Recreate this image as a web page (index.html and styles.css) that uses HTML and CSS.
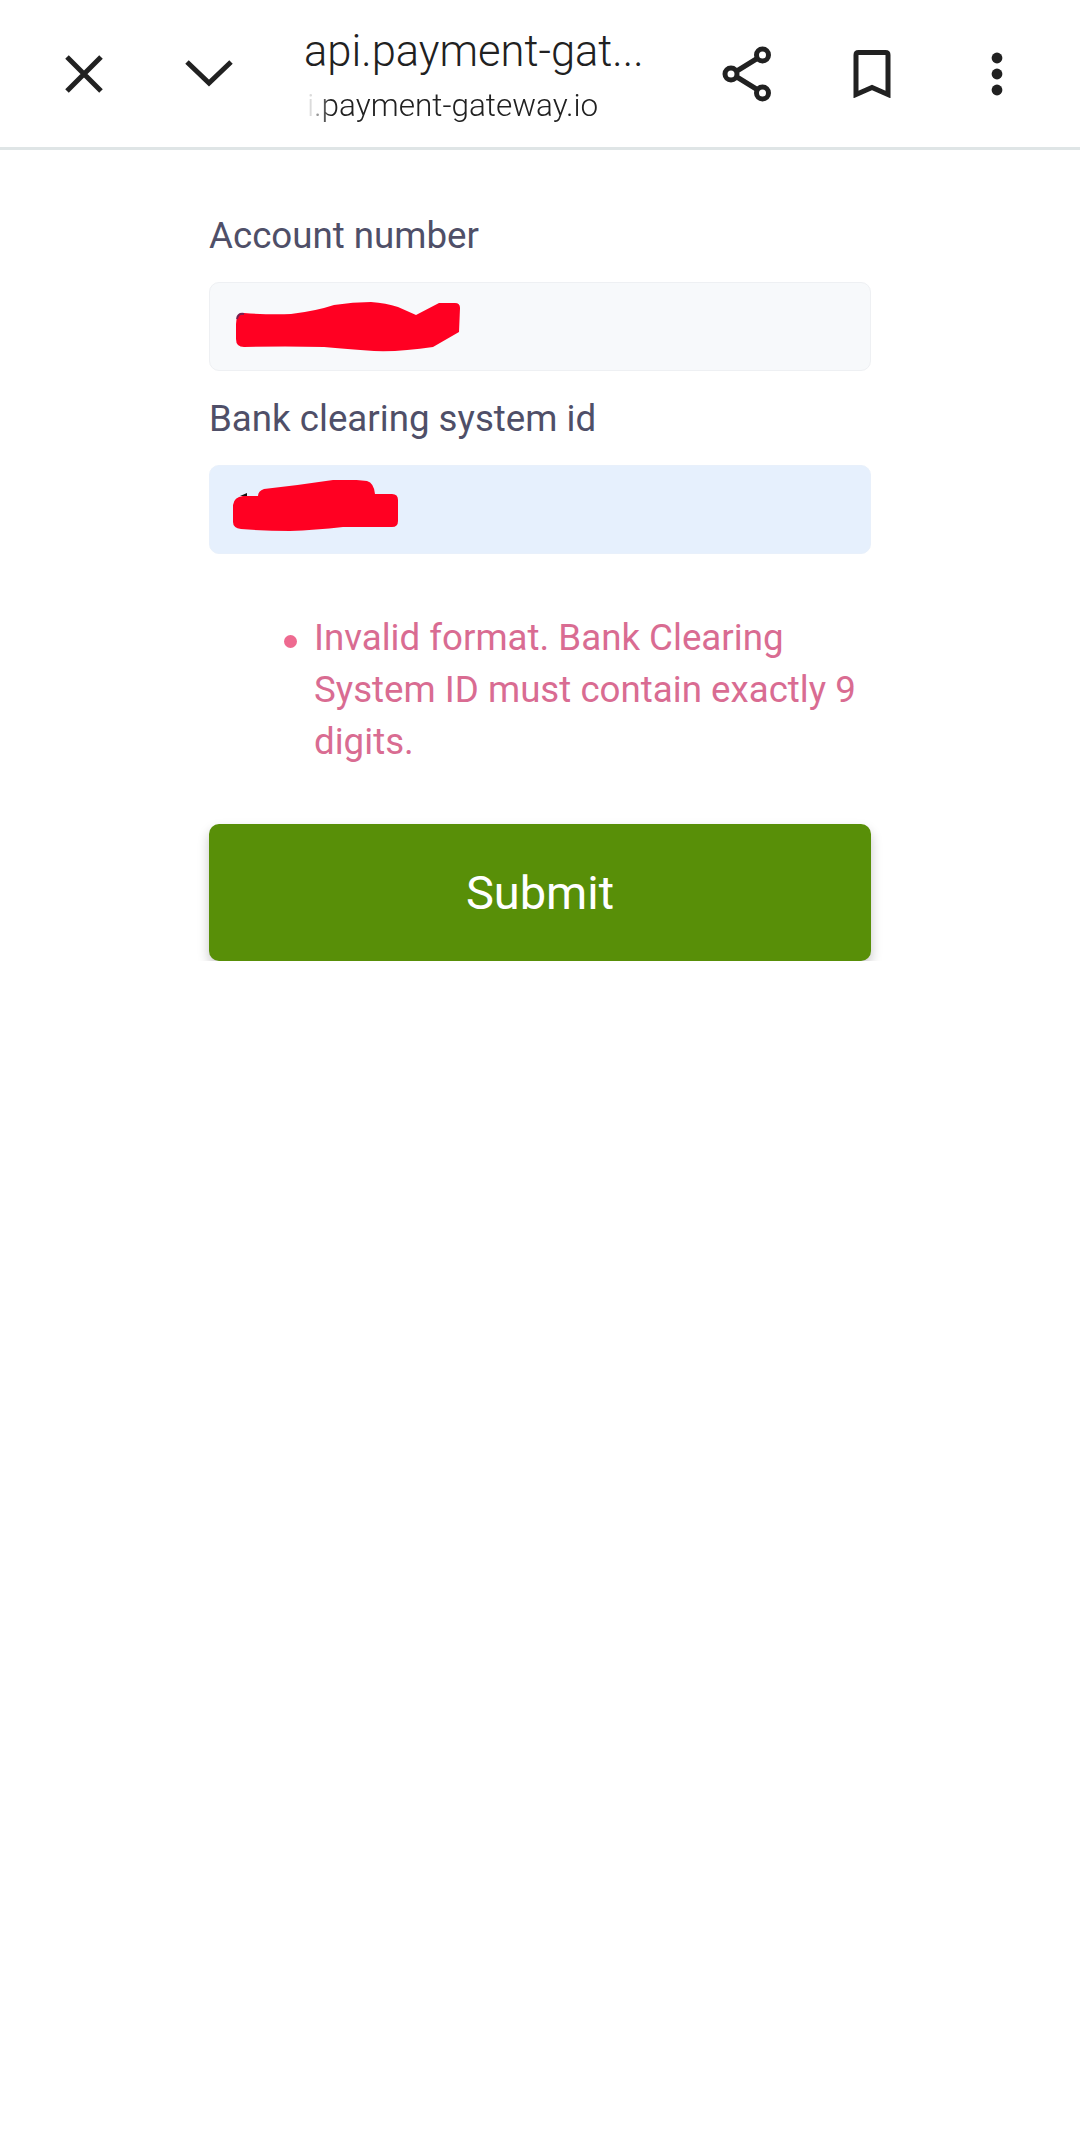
FILE: index.html
```html
<!DOCTYPE html>
<html>
<head lang="en">
    <meta charset="UTF-8">
    <title>api.payment-gateway.io</title>
    <link rel="stylesheet" href="styles.css">
</head>
<body>
<div class="topbar">
    <span class="btn">
        <svg width="40" height="40" viewBox="0 0 40 40"><path d="M3 3L37 37M37 3L3 37" fill="none" stroke="#212121" stroke-width="5"/></svg>
    </span>
    <span class="btn">
        <svg width="50" height="32" viewBox="0 0 50 32"><path d="M3 4L25 25L47 4" fill="none" stroke="#212121" stroke-width="5"/></svg>
    </span>
    <div class="address">
        <div class="page-title">api.payment-gat...</div>
        <div class="page-url">i.payment-gateway.io</div>
    </div>
    <span class="btn">
        <svg width="50" height="56" viewBox="0 0 50 56"><path d="M10 28L40 9.500M10 28L40 46.500" fill="none" stroke="#212121" stroke-width="5"/><circle cx="9" cy="28" r="6" fill="#fff" stroke="#212121" stroke-width="5"/><circle cx="40.500" cy="9" r="6" fill="#fff" stroke="#212121" stroke-width="5"/><circle cx="40.500" cy="47" r="6" fill="#fff" stroke="#212121" stroke-width="5"/></svg>
    </span>
    <span class="btn">
        <svg width="38" height="48" viewBox="0 0 38 48"><path d="M3 44.500V5Q3 2.500 5.500 2.500H32.500Q35 2.500 35 5V44.500L19 37.500Z" fill="none" stroke="#212121" stroke-width="5"/></svg>
    </span>
    <span class="btn">
        <svg width="12" height="44" viewBox="0 0 12 44"><circle cx="6" cy="6" r="5.400" fill="#212121"/><circle cx="6" cy="22" r="5.400" fill="#212121"/><circle cx="6" cy="38" r="5.400" fill="#212121"/></svg>
    </span>
</div>

<form class="form">
    <label class="label">Account number</label>
    <div class="field">
        <svg class="scribble" width="226" height="50" viewBox="235 301 226 50"><path d="M235 323Q235 312 243 312Q270 314 290 313Q315 310 333 304Q352 301 370 301Q385 302 397 306L415 314L438 302H454Q459 302 459 307L458 331L432 346Q400 351 373 350Q345 348 323 346Q285 345 243 346Q235 346 235 338Z" fill="#ff0022"/><path d="M236 318Q237 312 243 313" fill="none" stroke="#7a2050" stroke-width="2"/></svg>
    </div>
    <label class="label second">Bank clearing system id</label>
    <div class="field filled">
        <svg class="scribble wide" width="166" height="52" viewBox="233 480 166 52"><path d="M233 505Q234 497 243 496H258Q258 491 264 489Q300 485 333 480Q352 479 367 481Q374 483 375 494H392Q398 494 398 500V521Q398 527 392 527H343Q315 530 290 531Q265 531 241 529Q233 528 233 522Z" fill="#ff0022"/><path d="M240 496L247 493V496Z" fill="#111"/></svg>
    </div>
    <ul class="errors">
        <li>Invalid format. Bank Clearing System ID must contain exactly 9 digits.</li>
    </ul>
    <div class="submit">Submit</div>
</form>
</body>
</html>
```

FILE: styles.css
```css
*{
    margin: 0;
    padding: 0;
    box-sizing: border-box;
}
body{
    background: #fff;
    font-family: Roboto, "Liberation Sans", sans-serif;
}
ul{
    list-style: none;
}
.topbar{
    display: flex;
    align-items: center;
    height: 150px;
    padding: 0 21px;
    background: #fff;
    border-bottom: 3px solid #dfe5e6;
}
.btn{
    display: flex;
    align-items: center;
    justify-content: center;
    flex: none;
    width: 125px;
    height: 122px;
}
.address{
    flex: 1;
    min-width: 0;
    padding: 5px 0 0 33px;
    color: #212121;
}
.page-title{
    font-size: 43.500px;
    font-weight: 300;
    line-height: 60px;
    white-space: nowrap;
}
.page-url{
    overflow: hidden;
    padding-left: 3px;
    font-size: 31.500px;
    font-weight: 300;
    line-height: 48px;
    white-space: nowrap;
    -webkit-mask-image: linear-gradient(to right, rgba(0,0,0,0.05) 4px, #000 26px);
    mask-image: linear-gradient(to right, rgba(0,0,0,0.05) 4px, #000 26px);
}
.form{
    width: 662px;
    margin: 0 auto;
    padding-top: 62px;
}
.label{
    display: block;
    height: 70px;
    color: #4f4f68;
    font-size: 36.700px;
    line-height: 48px;
}
.second{
    margin-top: 24px;
    height: 70px;
}
.field{
    display: flex;
    align-items: center;
    height: 89px;
    padding-left: 26px;
    background: #f7f9fb;
    border: 1px solid #eef0f3;
    border-radius: 10px;
}
.filled{
    padding-left: 23px;
    background: #e6f0fd;
    border-color: #e8f0fb;
}
.wide{
    margin-top: -8px;
}
.errors{
    padding: 58px 0 0 105px;
    color: #d96c92;
    font-size: 36.700px;
    line-height: 52px;
}
.errors li{
    position: relative;
}
.errors li:before{
    content: "";
    position: absolute;
    left: -30px;
    top: 23px;
    width: 13px;
    height: 13px;
    border-radius: 50%;
    background: #ee6a90;
}
.submit{
    height: 137px;
    margin-top: 56px;
    background: #588f08;
    border-radius: 10px;
    box-shadow: 0 6px 12px rgba(0,0,0,0.22);
    color: #fff;
    font-size: 47px;
    line-height: 137px;
    text-align: center;
}
```
